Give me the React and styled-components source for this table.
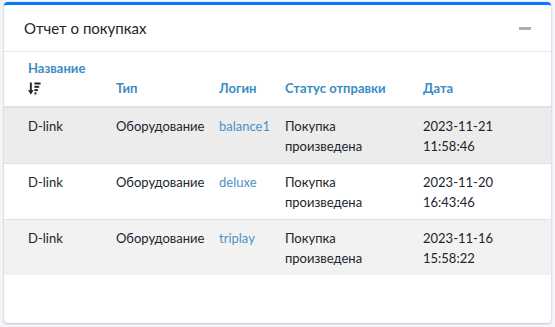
import React from "react";
import styled, { createGlobalStyle } from "styled-components";

const GlobalStyle = createGlobalStyle`
  * { box-sizing: border-box; }
  body {
    margin: 0;
    background: #f4f6f9;
    font-family: Lato, "Noto Sans", sans-serif;
    color: #212529;
  }
`;

const Page = styled.div`
  padding: 2px 4px;
`;

const Card = styled.section`
  height: 321px;
  background: #fff;
  border-top: 3px solid #007bff;
  border-radius: 4px;
  box-shadow: 0 0 1px rgba(0, 0, 0, 0.125), 0 1px 3px rgba(0, 0, 0, 0.2);
  display: flex;
  flex-direction: column;
`;

const CardHeader = styled.header`
  height: 47px;
  display: flex;
  align-items: center;
  justify-content: space-between;
  padding: 0 20px 0 20px;
  border-bottom: 1px solid #e5e7ea;
`;

const Title = styled.h3`
  margin: 0 0 1px;
  font-size: 15px;
  font-weight: 400;
  color: #212529;
`;

const CollapseButton = styled.button`
  width: 13px;
  height: 14px;
  padding: 0;
  border: 0;
  background: transparent;
  display: flex;
  align-items: center;
  justify-content: center;
  cursor: pointer;

  span {
    width: 12px;
    height: 3px;
    background: #a9afb5;
  }
`;

const Table = styled.table`
  width: 100%;
  border-collapse: collapse;
  table-layout: fixed;
  font-size: 13px;
`;

const HeadCell = styled.th`
  width: ${(p) => p.$w || "auto"};
  text-align: left;
  vertical-align: bottom;
  font-weight: 700;
  color: #3a8cc4;
  padding: 7px 0 8px ${(p) => p.$first ? "24px" : "0"};
  border-bottom: 2px solid #dee2e6;
  line-height: 19px;
`;

const SortWrap = styled.span`
  display: flex;
  align-items: center;
  height: 19px;
  margin-top: 1px;
`;

const Row = styled.tr`
  background: ${(p) => p.$bg};
  border-top: 1px solid #dee2e6;
`;

const Cell = styled.td`
  vertical-align: top;
  padding: 8px 0 7px ${(p) => p.$first ? "24px" : "0"};
  line-height: 20px;
  color: #212529;
`;

const Login = styled.a`
  color: #4a92c8;
  text-decoration: none;
`;

const SortIcon = () => (
  <svg width="13" height="13" viewBox="0 0 13 13">
    <rect x="1.9" y="0.5" width="1.9" height="9" fill="#212529" />
    <path d="M0 8.3 L2.85 12.5 L5.7 8.3 Z" fill="#212529" />
    <rect x="6.4" y="0.5" width="6.2" height="2" fill="#212529" />
    <rect x="6.4" y="3.8" width="4.8" height="2" fill="#212529" />
    <rect x="6.4" y="7.1" width="3.4" height="2" fill="#212529" />
    <rect x="6.4" y="10.4" width="2" height="2" fill="#212529" />
  </svg>
);

const purchases = [
  { name: "D-link", type: "Оборудование", login: "balance1", date: "2023-11-21", time: "11:58:46", bg: "#ececec" },
  { name: "D-link", type: "Оборудование", login: "deluxe", date: "2023-11-20", time: "16:43:46", bg: "#ffffff" },
  { name: "D-link", type: "Оборудование", login: "triplay", date: "2023-11-16", time: "15:58:22", bg: "#f2f2f2" },
];

export default function App() {
  return (
    <>
      <GlobalStyle />
      <Page>
        <Card>
          <CardHeader>
            <Title>Отчет о покупках</Title>
            <CollapseButton aria-label="Свернуть"><span /></CollapseButton>
          </CardHeader>
          <Table>
            <thead>
              <tr>
                <HeadCell $first $w="112px">
                  Название
                  <SortWrap><SortIcon /></SortWrap>
                </HeadCell>
                <HeadCell $w="103px">Тип</HeadCell>
                <HeadCell $w="66px">Логин</HeadCell>
                <HeadCell $w="138px">Статус отправки</HeadCell>
                <HeadCell>Дата</HeadCell>
              </tr>
            </thead>
            <tbody>
              {purchases.map((p) => (
                <Row key={p.login} $bg={p.bg}>
                  <Cell $first>{p.name}</Cell>
                  <Cell>{p.type}</Cell>
                  <Cell><Login href="#">{p.login}</Login></Cell>
                  <Cell>Покупка<br />произведена</Cell>
                  <Cell>{p.date}<br />{p.time}</Cell>
                </Row>
              ))}
            </tbody>
          </Table>
        </Card>
      </Page>
    </>
  );
}
